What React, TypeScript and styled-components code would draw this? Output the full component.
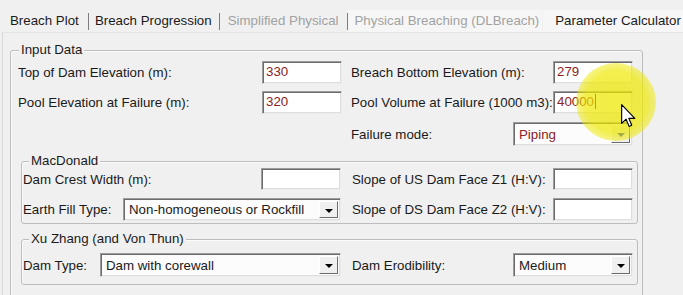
import React from 'react';
import styled, { createGlobalStyle } from 'styled-components';

const GlobalStyle = createGlobalStyle`
  body {
    margin: 0;
    background: #f0f0f0;
    font-family: "Liberation Sans", Arial, sans-serif;
    font-size: 13.3px;
    color: #1a1a1a;
  }
`;

const Page = styled.div`
  position: relative;
  width: 683px;
  height: 295px;
  overflow: hidden;
  background: #f0f0f0;
`;

const TabStrip = styled.div`
  display: flex;
  align-items: center;
  height: 22px;
  padding: 10px 0 0 3px;
`;

const Tab = styled.div<{ w: number; pad: number; disabled?: boolean; light?: boolean }>`
  width: ${p => p.w}px;
  padding-left: ${p => p.pad}px;
  height: 22px;
  line-height: 22px;
  box-sizing: border-box;
  white-space: nowrap;
  color: ${p => (p.disabled ? '#a2a2a2' : '#1a1a1a')};
  background: ${p => (p.light ? '#f6f6f6' : 'transparent')};
`;

const Sep = styled.div`
  width: 1px;
  height: 17px;
  background: #7c7c7c;
`;

const TabPage = styled.div`
  margin-left: 2px;
  border-left: 1px solid #dadada;
  border-top: 1px solid #e4e4e4;
  padding: 17px 0 0 7px;
`;

const Group = styled.div<{ mt?: number; ml?: number; w: number; pt: number; pb: number; h?: number }>`
  position: relative;
  box-sizing: border-box;
  width: ${p => p.w}px;
  ${p => (p.h ? `height: ${p.h}px;` : '')}
  margin-top: ${p => p.mt || 0}px;
  margin-left: ${p => p.ml || 0}px;
  padding-top: ${p => p.pt}px;
  padding-bottom: ${p => p.pb}px;
  border: 1px solid #bdbdbd;
  border-radius: 3px;
  box-shadow: inset 1px 1px 0 #fbfbfb;
`;

const Legend = styled.span<{ left: number }>`
  position: absolute;
  top: -9px;
  left: ${p => p.left}px;
  padding: 0 2px;
  line-height: 16px;
  background: #f0f0f0;
`;

const Rows = styled.div<{ pl: number }>`
  display: flex;
  flex-direction: column;
  gap: 7px;
  padding-left: ${p => p.pl}px;
`;

const Row = styled.div<{ gap: number; h: number }>`
  display: flex;
  gap: ${p => p.gap}px;
  height: ${p => p.h}px;
`;

const Half = styled.div<{ w: number }>`
  display: flex;
  align-items: center;
  justify-content: space-between;
  width: ${p => p.w}px;
  height: 100%;
  white-space: nowrap;
`;

const sunken = `
  box-sizing: border-box;
  border-style: solid;
  border-width: 1px;
  border-color: #9c9c9c #ececec #ececec #9c9c9c;
  box-shadow: inset 1px 1px 0 #6b6b6b, inset -1px -1px 0 #dedede;
`;

const TextBox = styled.div<{ w?: number }>`
  ${sunken}
  width: ${p => p.w || 80}px;
  height: 100%;
  background: #fff;
  padding: 2px 0 0 3px;
  line-height: 16px;
  color: #8c2222;
`;

const Caret = styled.span`
  display: inline-block;
  width: 1px;
  height: 15px;
  margin-left: 1px;
  vertical-align: -3px;
  background: #111;
`;

const Combo = styled.div<{ w: number }>`
  ${sunken}
  display: flex;
  align-items: center;
  justify-content: space-between;
  width: ${p => p.w}px;
  height: 100%;
  background: #fcfcfc;
  padding: 0 2px 0 5px;
`;

const ComboText = styled.span<{ red?: boolean }>`
  color: ${p => (p.red ? '#8c2222' : '#1a1a1a')};
`;

const DropBtn = styled.span`
  display: flex;
  align-items: center;
  justify-content: center;
  box-sizing: border-box;
  width: 19px;
  height: calc(100% - 4px);
  border: 1px solid;
  border-color: #fff #6b6b6b #6b6b6b #fff;
  background: #f0f0f0;
`;

const Arrow = styled.span<{ color?: string }>`
  width: 0;
  height: 0;
  border-left: 4px solid transparent;
  border-right: 4px solid transparent;
  border-top: 4px solid ${p => p.color || '#000'};
  margin-top: 2px;
`;

const Highlight = styled.div`
  position: absolute;
  left: 576px;
  top: 63px;
  width: 80px;
  height: 78px;
  border-radius: 50%;
  background: radial-gradient(circle, rgba(238, 232, 0, 0.74) 0%, rgba(238, 232, 0, 0.7) 55%, rgba(238, 232, 0, 0) 100%);
`;

const Cursor = styled.svg`
  position: absolute;
  left: 621px;
  top: 104px;
`;

const Select = ({ w, text, red, arrow }: { w: number; text: string; red?: boolean; arrow?: string }) => (
  <Combo w={w}>
    <ComboText red={red}>{text}</ComboText>
    <DropBtn>
      <Arrow color={arrow} />
    </DropBtn>
  </Combo>
);

const App = () => {
  return (
    <Page>
      <GlobalStyle />
      <TabStrip>
        <Tab w={85} pad={7}>Breach Plot</Tab>
        <Sep />
        <Tab w={130} pad={6}>Breach Progression</Tab>
        <Sep />
        <Tab w={127} pad={8} disabled>Simplified Physical</Tab>
        <Sep />
        <Tab w={195} pad={7} disabled light>Physical Breaching (DLBreach)</Tab>
        <Tab w={140} pad={12} light style={{ marginLeft: 1 }}>Parameter Calculator</Tab>
      </TabStrip>
      <TabPage>
        <Group w={633} pt={10} pb={0} h={300}>
          <Legend left={8}>Input Data</Legend>
          <Rows pl={7}>
            <Row gap={9} h={23}>
              <Half w={324}>
                <span>Top of Dam Elevation (m):</span>
                <TextBox>330</TextBox>
              </Half>
              <Half w={282}>
                <span>Breach Bottom Elevation (m):</span>
                <TextBox>279</TextBox>
              </Half>
            </Row>
            <Row gap={9} h={23}>
              <Half w={324}>
                <span>Pool Elevation at Failure (m):</span>
                <TextBox>320</TextBox>
              </Half>
              <Half w={282}>
                <span>Pool Volume at Failure (1000 m3):</span>
                <TextBox>40000<Caret /></TextBox>
              </Half>
            </Row>
            <Row gap={9} h={24} style={{ marginTop: 1 }}>
              <Half w={324} />
              <Half w={282}>
                <span>Failure mode:</span>
                <Select w={120} text="Piping" red arrow="#1d3fc9" />
              </Half>
            </Row>
          </Rows>

          <Group w={617} ml={10} mt={15} pt={6} pb={2}>
            <Legend left={7}>MacDonald</Legend>
            <Rows pl={1} style={{ gap: 8 }}>
              <Row gap={11} h={22}>
                <Half w={318}>
                  <span>Dam Crest Width (m):</span>
                  <TextBox />
                </Half>
                <Half w={281}>
                  <span>Slope of US Dam Face Z1 (H:V):</span>
                  <TextBox />
                </Half>
              </Row>
              <Row gap={11} h={23}>
                <Half w={318}>
                  <span>Earth Fill Type:</span>
                  <Select w={218} text="Non-homogeneous or Rockfill" />
                </Half>
                <Half w={281}>
                  <span>Slope of DS Dam Face Z2 (H:V):</span>
                  <TextBox />
                </Half>
              </Row>
            </Rows>
          </Group>

          <Group w={617} ml={10} mt={15} pt={13} pb={7}>
            <Legend left={7}>Xu Zhang (and Von Thun)</Legend>
            <Rows pl={1}>
              <Row gap={11} h={24}>
                <Half w={318}>
                  <span>Dam Type:</span>
                  <Select w={241} text="Dam with corewall" />
                </Half>
                <Half w={281}>
                  <span>Dam Erodibility:</span>
                  <Select w={120} text="Medium" />
                </Half>
              </Row>
            </Rows>
          </Group>
        </Group>
      </TabPage>
      <Highlight />
      <Cursor width="15" height="24" viewBox="0 0 13 21">
        <path d="M0.5 0.5 L0.5 17 L4.4 13.3 L7 19.6 L9.3 18.6 L6.8 12.6 L12 12.6 Z" fill="#fff" stroke="#000" strokeWidth="1" strokeLinejoin="round" />
      </Cursor>
    </Page>
  );
};

export default App;
